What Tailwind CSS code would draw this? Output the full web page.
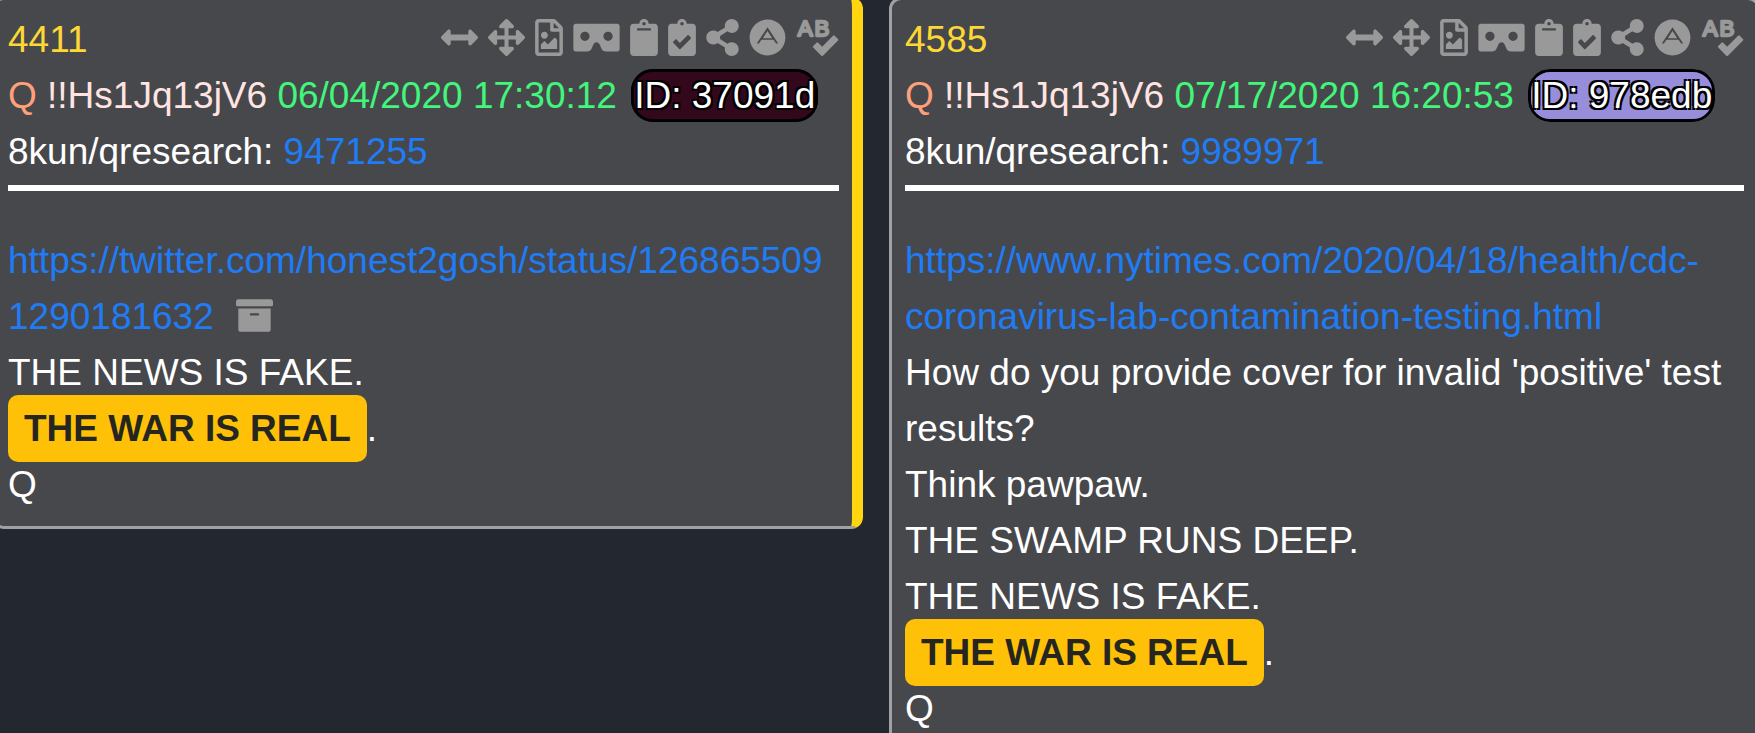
<!DOCTYPE html>
<html lang="en">
<head>
  <meta charset="UTF-8">
  <meta name="viewport" content="width=device-width, initial-scale=1">
  <title>Drops 4411 / 4585</title>
  <script src="https://cdn.jsdelivr.net/npm/@tailwindcss/browser@4"></script>
</head>
<body class="bg-[#23272f] text-white font-['Liberation_Sans',Arial,sans-serif] text-[37px] leading-[56px] overflow-hidden">

  <!-- Icons -->
  <svg class="hidden" xmlns="http://www.w3.org/2000/svg">
    <symbol id="arrows-h" viewBox="0 0 512 512"><path d="M377.941 169.941V216H134.059v-46.059c0-21.382-25.851-32.09-40.971-16.971L7.029 239.029c-9.373 9.373-9.373 24.568 0 33.941l86.059 86.059c15.119 15.119 40.971 4.411 40.971-16.971V296h243.882v46.059c0 21.382 25.851 32.09 40.971 16.971l86.059-86.059c9.373-9.373 9.373-24.568 0-33.941l-86.059-86.059c-15.119-15.12-40.971-4.412-40.971 16.97z"/></symbol>
    <symbol id="arrows" viewBox="0 0 512 512"><path d="M352.201 425.775l-79.196 79.196c-9.373 9.373-24.568 9.373-33.941 0l-79.196-79.196c-15.119-15.119-4.411-40.971 16.971-40.97h51.162L228 284H127.196v51.162c0 21.382-25.851 32.09-40.971 16.971L7.029 272.937c-9.373-9.373-9.373-24.569 0-33.941L86.225 159.8c15.119-15.119 40.971-4.411 40.971 16.971V228H228V127.196h-51.23c-21.382 0-32.09-25.851-16.971-40.971l79.196-79.196c9.373-9.373 24.568-9.373 33.941 0l79.196 79.196c15.119 15.119 4.411 40.971-16.971 40.971h-51.162V228h100.804v-51.162c0-21.382 25.851-32.09 40.97-16.971l79.196 79.196c9.373 9.373 9.373 24.569 0 33.941L425.773 352.2c-15.119 15.119-40.971 4.411-40.97-16.971V284H284v100.804h51.23c21.382 0 32.09 25.851 16.971 40.971z"/></symbol>
    <symbol id="file-image" viewBox="0 0 384 512"><path d="M369.9 97.9L286 14C277 5 264.8-.1 252.1-.1H48C21.5 0 0 21.5 0 48v416c0 26.5 21.5 48 48 48h288c26.5 0 48-21.5 48-48V131.9c0-12.7-5.1-25-14.1-34zM332.1 128H256V51.9l76.1 76.1zM48 464V48h160v104c0 13.3 10.7 24 24 24h104v288H48zm32-48h224V288l-23.5-23.5c-4.7-4.7-12.3-4.7-17 0L176 352l-39.5-39.5c-4.7-4.7-12.3-4.7-17 0L80 352v64zm48-240c-26.5 0-48 21.5-48 48s21.5 48 48 48 48-21.5 48-48-21.5-48-48-48z"/></symbol>
    <symbol id="cardboard" viewBox="0 0 640 512"><path d="M608 64H32C14.33 64 0 78.33 0 96v320c0 17.67 14.33 32 32 32h160.22c25.19 0 48.03-14.77 58.36-37.74l27.74-61.64C286.21 331.08 302.35 320 320 320s33.79 11.08 41.68 28.62l27.74 61.64C399.75 433.23 422.6 448 447.78 448H608c17.67 0 32-14.33 32-32V96c0-17.67-14.33-32-32-32zM160 304c-35.35 0-64-28.65-64-64s28.65-64 64-64 64 28.65 64 64-28.65 64-64 64zm320 0c-35.35 0-64-28.65-64-64s28.65-64 64-64 64 28.65 64 64-28.65 64-64 64z"/></symbol>
    <symbol id="clipboard" viewBox="0 0 384 512"><path d="M384 112v352c0 26.51-21.49 48-48 48H48c-26.51 0-48-21.49-48-48V112c0-26.51 21.49-48 48-48h80c0-35.29 28.71-64 64-64s64 28.71 64 64h80c26.51 0 48 21.49 48 48zM192 40c-13.255 0-24 10.745-24 24s10.745 24 24 24 24-10.745 24-24-10.745-24-24-24m96 114v-20a6 6 0 0 0-6-6H102a6 6 0 0 0-6 6v20a6 6 0 0 0 6 6h180a6 6 0 0 0 6-6z"/></symbol>
    <symbol id="clipboard-check" viewBox="0 0 384 512"><path d="M336 64h-80c0-35.3-28.7-64-64-64s-64 28.7-64 64H48C21.5 64 0 85.5 0 112v352c0 26.5 21.5 48 48 48h288c26.5 0 48-21.5 48-48V112c0-26.5-21.5-48-48-48zM192 40c13.3 0 24 10.7 24 24s-10.7 24-24 24-24-10.7-24-24 10.7-24 24-24zm121.2 231.8l-143 141.8c-4.7 4.7-12.3 4.6-17-.1l-82.6-83.3c-4.7-4.7-4.6-12.3.1-17L99.1 285c4.7-4.7 12.3-4.6 17 .1l46 46.4 106-105.2c4.7-4.7 12.3-4.6 17 .1l28.2 28.4c4.7 4.8 4.6 12.3-.1 17z"/></symbol>
    <symbol id="share" viewBox="0 0 448 512"><path d="M352 320c-22.608 0-43.387 7.819-59.79 20.895l-102.486-64.054a96.551 96.551 0 0 0 0-41.683l102.486-64.054C308.613 184.181 329.392 192 352 192c53.019 0 96-42.981 96-96S405.019 0 352 0s-96 42.981-96 96c0 7.158.79 14.13 2.276 20.841L155.79 180.895C139.387 167.819 118.608 160 96 160c-53.019 0-96 42.981-96 96s42.981 96 96 96c22.608 0 43.387-7.819 59.79-20.895l102.486 64.054A96.301 96.301 0 0 0 256 416c0 53.019 42.981 96 96 96s96-42.981 96-96-42.981-96-96-96z"/></symbol>
    <symbol id="adn" viewBox="0 0 496 512"><path d="M248 167.5l64.9 98.8H183.1l64.9-98.8zM496 256c0 136.9-111.1 248-248 248S0 392.9 0 256 111.1 8 248 8s248 111.1 248 248zm-99.8 82.7L248 115.5 99.8 338.7h30.4l33.6-51.7h168.6l33.6 51.7h30.2z"/></symbol>
    <symbol id="spell-check" viewBox="0 0 576 512">
      <text x="14" y="241" font-size="310" stroke="currentColor" stroke-width="32" stroke-linejoin="round">A</text>
      <text x="246" y="241" font-size="310" stroke="currentColor" stroke-width="32" stroke-linejoin="round">B</text>
      <path d="M571.37 276.48l-45.21-45.3a15.88 15.88 0 0 0-22.59 0l-151.5 151.5-55.41-55.5a15.88 15.88 0 0 0-22.59 0l-45.3 45.3a16 16 0 0 0 0 22.59l112 112.21a15.89 15.89 0 0 0 22.6 0l208-208.21a16 16 0 0 0-.02-22.59z"/>
    </symbol>
    <symbol id="archive" viewBox="0 0 512 512"><path d="M32 448c0 17.7 14.3 32 32 32h384c17.7 0 32-14.3 32-32V160H32v288zm160-212c0-6.6 5.4-12 12-12h104c6.6 0 12 5.4 12 12v8c0 6.6-5.4 12-12 12H204c-6.6 0-12-5.4-12-12v-8zM480 32H32C14.3 32 0 46.3 0 64v48c0 8.8 7.2 16 16 16h480c8.8 0 16-7.2 16-16V64c0-17.7-14.3-32-32-32z"/></symbol>
  </svg>

  <main class="grid grid-cols-2 items-start gap-[26px] -ml-2 -mr-[5px] -mt-[3px]">

    <!-- Drop 4411 -->
    <article class="min-w-0 bg-[#47484c] border-3 border-[#a0a1a4] border-r-11 border-r-[#ffd60f] rounded-xl px-[13px] pt-3 pb-[13px]">
      <header>
        <div class="flex justify-between items-start">
          <a href="#4411" class="text-[#fdd835]">4411</a>
          <div class="flex items-center gap-[10px] pt-[7px] leading-none text-[#999]">
            <button type="button" aria-label="Expand width"><svg class="w-[37px] h-[37px] fill-current"><use href="#arrows-h"/></svg></button>
            <button type="button" aria-label="Expand"><svg class="w-[37px] h-[37px] fill-current"><use href="#arrows"/></svg></button>
            <button type="button" aria-label="Save as image"><svg class="w-[28px] h-[37px] fill-current"><use href="#file-image"/></svg></button>
            <button type="button" aria-label="View"><svg class="w-[47px] h-[37px] fill-current"><use href="#cardboard"/></svg></button>
            <button type="button" aria-label="Copy"><svg class="w-[28px] h-[37px] fill-current"><use href="#clipboard"/></svg></button>
            <button type="button" aria-label="Copy link"><svg class="w-[28px] h-[37px] fill-current"><use href="#clipboard-check"/></svg></button>
            <button type="button" aria-label="Share"><svg class="w-[33px] h-[37px] fill-current"><use href="#share"/></svg></button>
            <button type="button" aria-label="Answers"><svg class="w-[37px] h-[37px] fill-current"><use href="#adn"/></svg></button>
            <button type="button" aria-label="Abbreviations"><svg class="w-[43px] h-[37px] fill-current"><use href="#spell-check"/></svg></button>
          </div>
        </div>
        <div>
          <span class="text-[#ffa07a]">Q</span>
          <span class="text-[#ffe4e1]">!!Hs1Jq13jV6</span>
          <time class="text-[#42f57b]">06/04/2020 17:30:12</time>
          <span class="ml-1 bg-[#33081c] border-3 border-black rounded-[22px] py-[3px] [text-shadow:2px_2px_0_#000,-2px_-2px_0_#000,2px_-2px_0_#000,-2px_2px_0_#000]">ID: 37091d</span>
        </div>
        <div>8kun/qresearch: <a href="#" class="text-[#1f7cf5]">9471255</a></div>
      </header>
      <hr class="border-t-6 border-white mt-[5px] mb-[42px]">
      <div>
        <a href="#" class="text-[#1f7cf5] break-all">https://twitter.com/honest2gosh/status/1268655091290181632</a>
        <a href="#" aria-label="Archive" class="inline-block ml-3 align-[-5px] leading-none text-[#999]"><svg class="w-[37px] h-[37px] fill-current"><use href="#archive"/></svg></a>
        <p>THE NEWS IS FAKE.</p>
        <p><mark class="bg-[#ffc107] text-[#25261f] font-bold rounded-[10px] px-4 py-[13px]">THE WAR IS REAL</mark>.</p>
        <p>Q</p>
      </div>
    </article>

    <!-- Drop 4585 -->
    <article class="min-w-0 bg-[#47484c] border-3 border-[#a0a1a4] rounded-xl px-[13px] pt-3 pb-[13px]">
      <header>
        <div class="flex justify-between items-start">
          <a href="#4585" class="text-[#fdd835]">4585</a>
          <div class="flex items-center gap-[10px] pt-[7px] leading-none text-[#999]">
            <button type="button" aria-label="Expand width"><svg class="w-[37px] h-[37px] fill-current"><use href="#arrows-h"/></svg></button>
            <button type="button" aria-label="Expand"><svg class="w-[37px] h-[37px] fill-current"><use href="#arrows"/></svg></button>
            <button type="button" aria-label="Save as image"><svg class="w-[28px] h-[37px] fill-current"><use href="#file-image"/></svg></button>
            <button type="button" aria-label="View"><svg class="w-[47px] h-[37px] fill-current"><use href="#cardboard"/></svg></button>
            <button type="button" aria-label="Copy"><svg class="w-[28px] h-[37px] fill-current"><use href="#clipboard"/></svg></button>
            <button type="button" aria-label="Copy link"><svg class="w-[28px] h-[37px] fill-current"><use href="#clipboard-check"/></svg></button>
            <button type="button" aria-label="Share"><svg class="w-[33px] h-[37px] fill-current"><use href="#share"/></svg></button>
            <button type="button" aria-label="Answers"><svg class="w-[37px] h-[37px] fill-current"><use href="#adn"/></svg></button>
            <button type="button" aria-label="Abbreviations"><svg class="w-[43px] h-[37px] fill-current"><use href="#spell-check"/></svg></button>
          </div>
        </div>
        <div>
          <span class="text-[#ffa07a]">Q</span>
          <span class="text-[#ffe4e1]">!!Hs1Jq13jV6</span>
          <time class="text-[#42f57b]">07/17/2020 16:20:53</time>
          <span class="ml-1 bg-[#978edb] border-3 border-black rounded-[22px] py-[3px] [text-shadow:2px_2px_0_#000,-2px_-2px_0_#000,2px_-2px_0_#000,-2px_2px_0_#000]">ID: 978edb</span>
        </div>
        <div>8kun/qresearch: <a href="#" class="text-[#1f7cf5]">9989971</a></div>
      </header>
      <hr class="border-t-6 border-white mt-[5px] mb-[42px]">
      <div>
        <a href="#" class="text-[#1f7cf5]">https://www.nytimes.com/2020/04/18/health/cdc-coronavirus-lab-contamination-testing.html</a>
        <p>How do you provide cover for invalid 'positive' test results?</p>
        <p>Think pawpaw.</p>
        <p>THE SWAMP RUNS DEEP.</p>
        <p>THE NEWS IS FAKE.</p>
        <p><mark class="bg-[#ffc107] text-[#25261f] font-bold rounded-[10px] px-4 py-[13px]">THE WAR IS REAL</mark>.</p>
        <p>Q</p>
      </div>
    </article>

  </main>

</body>
</html>
